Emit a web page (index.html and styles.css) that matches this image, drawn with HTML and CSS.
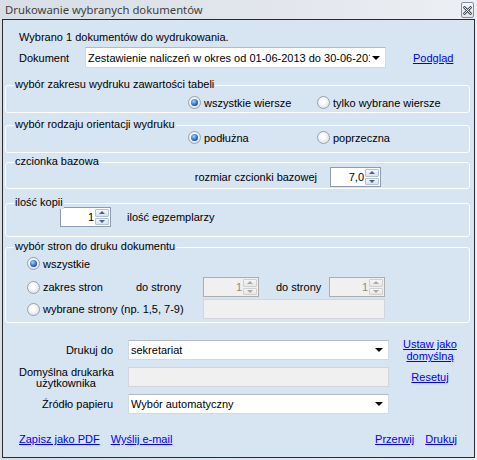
FILE: index.html
```html
<!DOCTYPE html>
<html lang="pl">
<head>
<meta charset="utf-8">
<title>Drukowanie wybranych dokumentów</title>
<link rel="stylesheet" href="styles.css">
</head>
<body>
<div class="window">
  <div class="titlebar">
    <span class="title">Drukowanie wybranych dokumentów</span>
    <span class="close">
      <svg width="9" height="9" viewBox="0 0 9 9">
        <path d="M1.5 1.5 L7.5 7.5 M7.5 1.5 L1.5 7.5" stroke="#4a505a" stroke-width="2.6" stroke-linecap="square"/>
        <path d="M1.5 1.5 L7.5 7.5 M7.5 1.5 L1.5 7.5" stroke="#f6f8fb" stroke-width="0.9" stroke-linecap="square"/>
      </svg>
    </span>
  </div>
  <div class="client">
    <div class="info">Wybrano 1 dokumentów do wydrukowania.</div>
    <div class="docrow">
      <span class="doc-label">Dokument</span>
      <div class="select doc-select">
        <span class="sel-text">Zestawienie naliczeń w okres od 01-06-2013 do 30-06-2013</span>
        <span class="arrow"></span>
      </div>
      <a class="link podglad" href="#">Podgląd</a>
    </div>

    <div class="group g1">
      <span class="group-title">wybór zakresu wydruku zawartości tabeli</span>
      <div class="radios">
        <label class="opt opt-first"><span class="radio checked"></span>wszystkie wiersze</label>
        <label class="opt"><span class="radio"></span>tylko wybrane wiersze</label>
      </div>
    </div>

    <div class="group g2">
      <span class="group-title">wybór rodzaju orientacji wydruku</span>
      <div class="radios">
        <label class="opt opt-first"><span class="radio checked"></span>podłużna</label>
        <label class="opt"><span class="radio"></span>poprzeczna</label>
      </div>
    </div>

    <div class="group g3">
      <span class="group-title">czcionka bazowa</span>
      <div class="font-row">
        <span>rozmiar czcionki bazowej</span>
        <div class="spin spin-font">
          <span class="spin-val">7,0</span>
          <span class="spin-btns"><span class="spin-btn"><i class="tri-up"></i></span><span class="spin-btn"><i class="tri-down"></i></span></span>
        </div>
      </div>
    </div>

    <div class="group g4">
      <span class="group-title">ilość kopii</span>
      <div class="copy-row">
        <div class="spin spin-copy">
          <span class="spin-val">1</span>
          <span class="spin-btns"><span class="spin-btn"><i class="tri-up"></i></span><span class="spin-btn"><i class="tri-down"></i></span></span>
        </div>
        <span>ilość egzemplarzy</span>
      </div>
    </div>

    <div class="group g5">
      <span class="group-title">wybór stron do druku dokumentu</span>
      <div class="pages">
        <label class="opt prow1"><span class="radio checked"></span>wszystkie</label>
        <div class="prow2">
          <label class="opt opt-range"><span class="radio"></span>zakres stron</label>
          <span class="to-label">do strony</span>
          <div class="spin spin-page disabled">
            <span class="spin-val">1</span>
            <span class="spin-btns"><span class="spin-btn"><i class="tri-up"></i></span><span class="spin-btn"><i class="tri-down"></i></span></span>
          </div>
          <span class="to-label to-label2">do strony</span>
          <div class="spin spin-page disabled">
            <span class="spin-val">1</span>
            <span class="spin-btns"><span class="spin-btn"><i class="tri-up"></i></span><span class="spin-btn"><i class="tri-down"></i></span></span>
          </div>
        </div>
        <div class="prow3">
          <label class="opt opt-sel"><span class="radio"></span>wybrane strony (np. 1,5, 7-9)</label>
          <div class="textbox disabled pages-box"></div>
        </div>
      </div>
    </div>

    <div class="printer-grid">
      <span class="plabel">Drukuj do</span>
      <div class="select"><span class="sel-text">sekretariat</span><span class="arrow"></span></div>
      <a class="link two-line" href="#">Ustaw jako<br>domyślną</a>

      <span class="plabel plabel-center">Domyślna drukarka<br>użytkownika</span>
      <div class="textbox disabled"></div>
      <a class="link" href="#">Resetuj</a>

      <span class="plabel">Źródło papieru</span>
      <div class="select"><span class="sel-text">Wybór automatyczny</span><span class="arrow"></span></div>
      <span></span>
    </div>

    <div class="bottom-links">
      <a class="link" href="#">Zapisz jako PDF</a>
      <a class="link" href="#">Wyślij e-mail</a>
      <span class="spacer"></span>
      <a class="link" href="#">Przerwij</a>
      <a class="link" href="#">Drukuj</a>
    </div>
  </div>
</div>
</body>
</html>
```

FILE: styles.css
```css
* { box-sizing: border-box; }
html, body { margin: 0; padding: 0; }
body {
  font-family: "Liberation Sans", Arial, sans-serif;
  font-size: 11px;
  color: #000;
  background: #fff;
}
.window {
  width: 477px;
  height: 460px;
  background: linear-gradient(to right, #d8dee6, #e3e7ed 60%, #eceff3);
  display: flex;
  flex-direction: column;
}
.titlebar {
  height: 19px;
  display: flex;
  align-items: center;
  justify-content: space-between;
  padding: 0 3px 0 5px;
}
.title {
  font-family: "Noto Sans", "Open Sans", sans-serif;
  font-size: 11.3px;
  color: #3e3e3e;
  line-height: 16px;
  padding-top: 1px;
}
.close {
  width: 13px;
  height: 16px;
  margin-top: 1px;
  border: 1px solid #8190a8;
  border-radius: 2px;
  background: linear-gradient(#f4f6f9, #e1e6ed);
  display: flex;
  align-items: center;
  justify-content: center;
}
.client {
  height: 439px;
  margin: 0 2px;
  border: 1px solid #2b2b2b;
  background: #d7e4f2;
}
.info {
  margin: 10px 0 0 16px;
  line-height: 14px;
  height: 14px;
}
.docrow {
  display: flex;
  align-items: center;
  margin-top: 3px;
  height: 21px;
  padding-left: 16px;
}
.doc-label { width: 66px; }
.select {
  display: flex;
  align-items: center;
  height: 20px;
  background: #fff;
  border: 1px solid #d3d9e0;
  border-top-color: #b4bac2;
  padding-left: 2px;
}
.doc-select { width: 301px; height: 21px; }
.sel-text {
  flex: 1;
  white-space: nowrap;
  overflow: hidden;
}
.arrow {
  flex: none;
  width: 0;
  height: 0;
  margin: 0 5px 0 4px;
  border-left: 4px solid transparent;
  border-right: 4px solid transparent;
  border-top: 4px solid #000;
}
.doc-select .sel-text { margin-right: -2px; }
.link {
  color: #0000ff;
  text-decoration: underline;
}
.podglad { margin-left: 27px; }

.group {
  position: relative;
  margin: 0 4px 0 2px;
  border: 1px solid #ffffff;
  border-radius: 3px;
}
.group-title {
  position: absolute;
  top: -8px;
  left: 8px;
  padding: 0 1px;
  line-height: 13px;
  background: #d7e4f2;
  white-space: nowrap;
}
.radios {
  display: flex;
  padding-left: 182px;
}
.opt {
  display: flex;
  align-items: center;
  height: 13px;
  gap: 3px;
  white-space: nowrap;
}
.opt-first { width: 129px; }
.radio {
  position: relative;
  flex: none;
  width: 13px;
  height: 13px;
  border-radius: 50%;
  border: 1px solid #98a1ac;
  background: radial-gradient(circle at 45% 40%, #ffffff 20%, #e3e7ec 70%, #cdd3da);
}
.radio.checked::after {
  content: "";
  position: absolute;
  left: 2px;
  top: 2px;
  width: 7px;
  height: 7px;
  border-radius: 50%;
  background: radial-gradient(circle at 40% 35%, #a9d4ff 0%, #3d7fe0 45%, #15409c 80%, #0e2f6e);
}
.g1 { margin-top: 17px; height: 28px; }
.g1 .radios { padding-top: 10px; }
.g2 { margin-top: 12px; height: 28px; }
.g2 .radios { padding-top: 5px; }
.g3 { margin-top: 9px; height: 27px; }
.font-row {
  display: flex;
  align-items: center;
  justify-content: flex-end;
  gap: 13px;
  padding: 4px 88px 0 0;
}
.g4 { margin-top: 14px; height: 34px; }
.copy-row {
  display: flex;
  align-items: center;
  gap: 16px;
  padding: 3px 0 0 54px;
}

.spin {
  display: flex;
  height: 20px;
  background: #fff;
  border: 1px solid #8e9cae;
}
.spin-font, .spin-copy { width: 51px; }
.spin-val {
  flex: 1;
  text-align: right;
  line-height: 18px;
  padding-right: 1px;
}
.spin-btns {
  width: 15px;
  display: flex;
  flex-direction: column;
  gap: 1px;
  padding: 1px 1px 1px 0;
}
.spin-btn {
  flex: 1;
  display: flex;
  align-items: center;
  justify-content: center;
  border: 1px solid #b3c2d6;
  border-radius: 1px;
  background: linear-gradient(#f4f7fb, #d8e2ef);
}
.tri-up, .tri-down {
  width: 0;
  height: 0;
  border-left: 3px solid transparent;
  border-right: 3px solid transparent;
}
.tri-up { border-bottom: 3px solid #4c5f80; }
.tri-down { border-top: 3px solid #4c5f80; }
.spin.disabled {
  background: #f0f0f0;
  border-color: #adadad;
  color: #8a8a8a;
}
.spin.disabled .spin-btn {
  border-color: #d0d0d0;
  background: linear-gradient(#f6f6f6, #e6e6e6);
}
.spin.disabled .tri-up { border-bottom-color: #a8a8a8; }
.spin.disabled .tri-down { border-top-color: #a8a8a8; }

.g5 { margin-top: 10px; height: 76px; }
.pages { padding: 9px 0 0 21px; }
.prow2 {
  display: flex;
  align-items: center;
  margin-top: 7px;
}
.opt-range { width: 109px; }
.to-label { width: 67px; white-space: nowrap; }
.to-label2 { margin-left: 17px; width: 53px; }
.spin-page { width: 56px; }
.prow3 {
  display: flex;
  align-items: center;
  margin-top: 2px;
}
.opt-sel { width: 176px; }
.textbox {
  height: 20px;
  background: #fff;
  border: 1px solid #adadad;
}
.textbox.disabled { background: #f0f0f0; border-color: #d2d6dc; }
.pages-box { width: 182px; border-color: #adadad; }

.printer-grid {
  display: grid;
  grid-template-columns: 94px 261px 56px;
  grid-auto-rows: 20px;
  column-gap: 15px;
  row-gap: 7px;
  margin-top: 17px;
  padding-left: 16px;
  align-items: center;
}
.printer-grid > :nth-child(3n+3) { margin-left: -4px; text-align: center; }
.plabel {
  text-align: right;
  white-space: nowrap;
}
.plabel-center {
  text-align: center;
  line-height: 11px;
  margin-top: 1px;
}
.two-line { line-height: 12px; }

.bottom-links {
  display: flex;
  align-items: center;
  height: 14px;
  margin-top: 18px;
  padding: 0 17px 0 16px;
  gap: 11px;
}
.spacer { flex: 1; }
```
